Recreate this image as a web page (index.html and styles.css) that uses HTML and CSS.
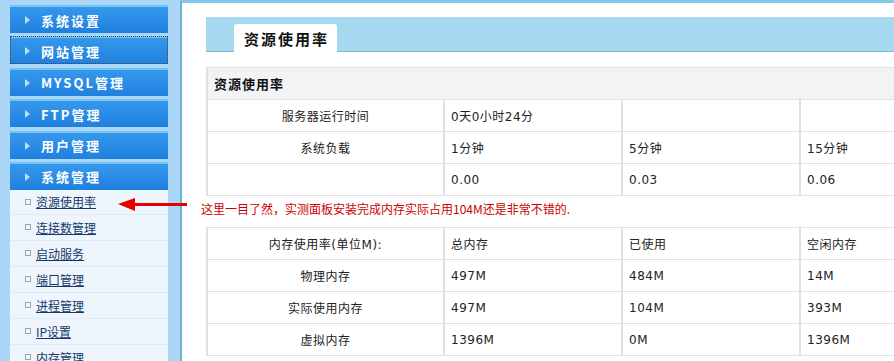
FILE: index.html
```html
<!DOCTYPE html>
<html lang="zh-CN">
<head>
    <meta charset="UTF-8">
    <meta name="viewport" content="width=device-width, initial-scale=1.0">
    <title>资源使用率</title>
    <link rel="stylesheet" href="styles.css">
</head>
<body>
    <div class="page">
        <aside class="sidebar">
            <div class="menu">
                <a class="menu-item">系统设置</a>
                <a class="menu-item focused">网站管理</a>
                <a class="menu-item">MYSQL管理</a>
                <a class="menu-item">FTP管理</a>
                <a class="menu-item">用户管理</a>
                <a class="menu-item">系统管理</a>
                <ul class="submenu">
                    <li><a href="#">资源使用率</a></li>
                    <li><a href="#">连接数管理</a></li>
                    <li><a href="#">启动服务</a></li>
                    <li><a href="#">端口管理</a></li>
                    <li><a href="#">进程管理</a></li>
                    <li><a href="#">IP设置</a></li>
                    <li><a href="#">内存管理</a></li>
                </ul>
            </div>
        </aside>

        <main class="main">
            <div class="tabbar">
                <span class="tab">资源使用率</span>
            </div>

            <table class="info">
                <colgroup>
                    <col class="col-label">
                    <col class="col-value">
                    <col class="col-value">
                    <col class="col-value">
                </colgroup>
                <tr class="head-row">
                    <th colspan="4">资源使用率</th>
                </tr>
                <tr>
                    <td class="label">服务器运行时间</td>
                    <td>0天0小时24分</td>
                    <td></td>
                    <td></td>
                </tr>
                <tr>
                    <td class="label">系统负载</td>
                    <td>1分钟</td>
                    <td>5分钟</td>
                    <td>15分钟</td>
                </tr>
                <tr>
                    <td class="label"></td>
                    <td>0.00</td>
                    <td>0.03</td>
                    <td>0.06</td>
                </tr>
                <tr class="gap-row">
                    <td colspan="4"></td>
                </tr>
                <tr>
                    <td class="label">内存使用率(单位M):</td>
                    <td>总内存</td>
                    <td>已使用</td>
                    <td>空闲内存</td>
                </tr>
                <tr>
                    <td class="label">物理内存</td>
                    <td>497M</td>
                    <td>484M</td>
                    <td>14M</td>
                </tr>
                <tr>
                    <td class="label">实际使用内存</td>
                    <td>497M</td>
                    <td>104M</td>
                    <td>393M</td>
                </tr>
                <tr>
                    <td class="label">虚拟内存</td>
                    <td>1396M</td>
                    <td>0M</td>
                    <td>1396M</td>
                </tr>
            </table>
        </main>
    </div>

    <!-- annotation drawn over the screenshot -->
    <div class="note">
        <span class="note-arrow"></span>
        <span class="note-text">这里一目了然，实测面板安装完成内存实际占用104M还是非常不错的.</span>
    </div>
</body>
</html>
```

FILE: styles.css
```css
body {
    margin: 0;
    background-color: #fff;
    font-family: "DejaVu Sans", "Noto Sans CJK SC", sans-serif;
    font-size: 12px;
    color: #222;
    overflow: hidden;
}

.page {
    display: flex;
    width: 894px;
    height: 361px;
    overflow: hidden;
}

.sidebar {
    flex: 0 0 180px;
    box-sizing: border-box;
    padding: 5px 12px 0 10px;
    background-color: #acd6f5;
}

.menu {
    display: flex;
    flex-direction: column;
}

.menu-item {
    display: flex;
    align-items: center;
    box-sizing: border-box;
    height: 28px;
    margin-bottom: 3.4px;
    padding-left: 31px;
    border-top: 2px solid #74c3f5;
    background: linear-gradient(#3598ec, #1f80de);
    color: #fff;
    font-family: "Noto Sans CJK SC", sans-serif;
    font-size: 13px;
    font-weight: bold;
    letter-spacing: 2px;
    position: relative;
}

.menu-item::before {
    content: "";
    position: absolute;
    left: 15px;
    top: 9px;
    border-top: 4px solid transparent;
    border-bottom: 4px solid transparent;
    border-left: 5px solid #b9dffb;
}

.menu-item.focused {
    outline: 1px dotted #3a4450;
    outline-offset: -1px;
}

.menu-item:last-of-type {
    margin-bottom: 0;
}

.submenu {
    list-style: none;
    margin: 0;
    padding: 0;
    background-color: #eef5fc;
}

.submenu li {
    display: flex;
    align-items: center;
    height: 26px;
    padding-left: 15px;
    border-bottom: 1px solid #dfe9f4;
    box-sizing: border-box;
}

.submenu li:first-child {
    height: 25px;
}

.submenu li::before {
    content: "";
    width: 4px;
    height: 4px;
    margin-right: 5px;
    border: 1px solid #98a6b8;
}

.submenu a {
    color: #15386b;
    font-family: "Noto Sans CJK SC", sans-serif;
    font-size: 12px;
    text-decoration: underline;
}

.main {
    flex: 1;
    box-sizing: border-box;
    padding: 14px 0 0 24px;
    border-left: 2px solid #6cb4d6;
    border-top: 3px solid #82c7ec;
    overflow: hidden;
}

.tabbar {
    display: flex;
    align-items: flex-end;
    width: 800px;
    height: 34px;
    padding-left: 28px;
    background-color: #a6d9ef;
    border-bottom: 1px solid #7dbdd0;
}

.tab {
    display: flex;
    align-items: center;
    height: 28px;
    margin-bottom: -1px;
    padding: 0 8px 0 10px;
    background-color: #fff;
    border-radius: 3px 3px 0 0;
    font-family: "Noto Sans CJK SC", sans-serif;
    font-size: 15px;
    font-weight: bold;
    letter-spacing: 2px;
    color: #111;
}

.info {
    width: 772px;
    margin-top: 15px;
    border-collapse: collapse;
    table-layout: fixed;
}

.col-label {
    width: 237px;
}

.col-value {
    width: 178px;
}

.info th,
.info td {
    height: 31px;
    padding: 0 6px;
    border: 1px solid #e1e1e1;
    border-width: 1px 2px;
    text-align: left;
    vertical-align: middle;
    white-space: nowrap;
    letter-spacing: 0.5px;
}

.info tr {
    border-bottom: 1px solid #e1e1e1;
}

.head-row th {
    background-color: #f2f3f5;
    font-family: "Noto Sans CJK SC", sans-serif;
    font-size: 13px;
    letter-spacing: 1px;
    color: #111;
}

.info td.label {
    text-align: center;
}

.gap-row td {
    border-left: none;
    border-right: none;
}

.note {
    position: absolute;
    left: 118px;
    top: 196px;
    display: flex;
    align-items: center;
    height: 16px;
}

.note-arrow {
    position: relative;
    width: 52px;
    height: 3px;
    margin-left: 17px;
    background-color: #e50000;
}

.note-arrow::before {
    content: "";
    position: absolute;
    left: -17px;
    top: -5px;
    border-top: 6px solid transparent;
    border-bottom: 7px solid transparent;
    border-right: 17px solid #e50000;
}

.note-text {
    margin-left: 14px;
    margin-top: 8px;
    color: #cc0000;
    font-family: "Noto Sans CJK SC", sans-serif;
    font-size: 12px;
}
```
